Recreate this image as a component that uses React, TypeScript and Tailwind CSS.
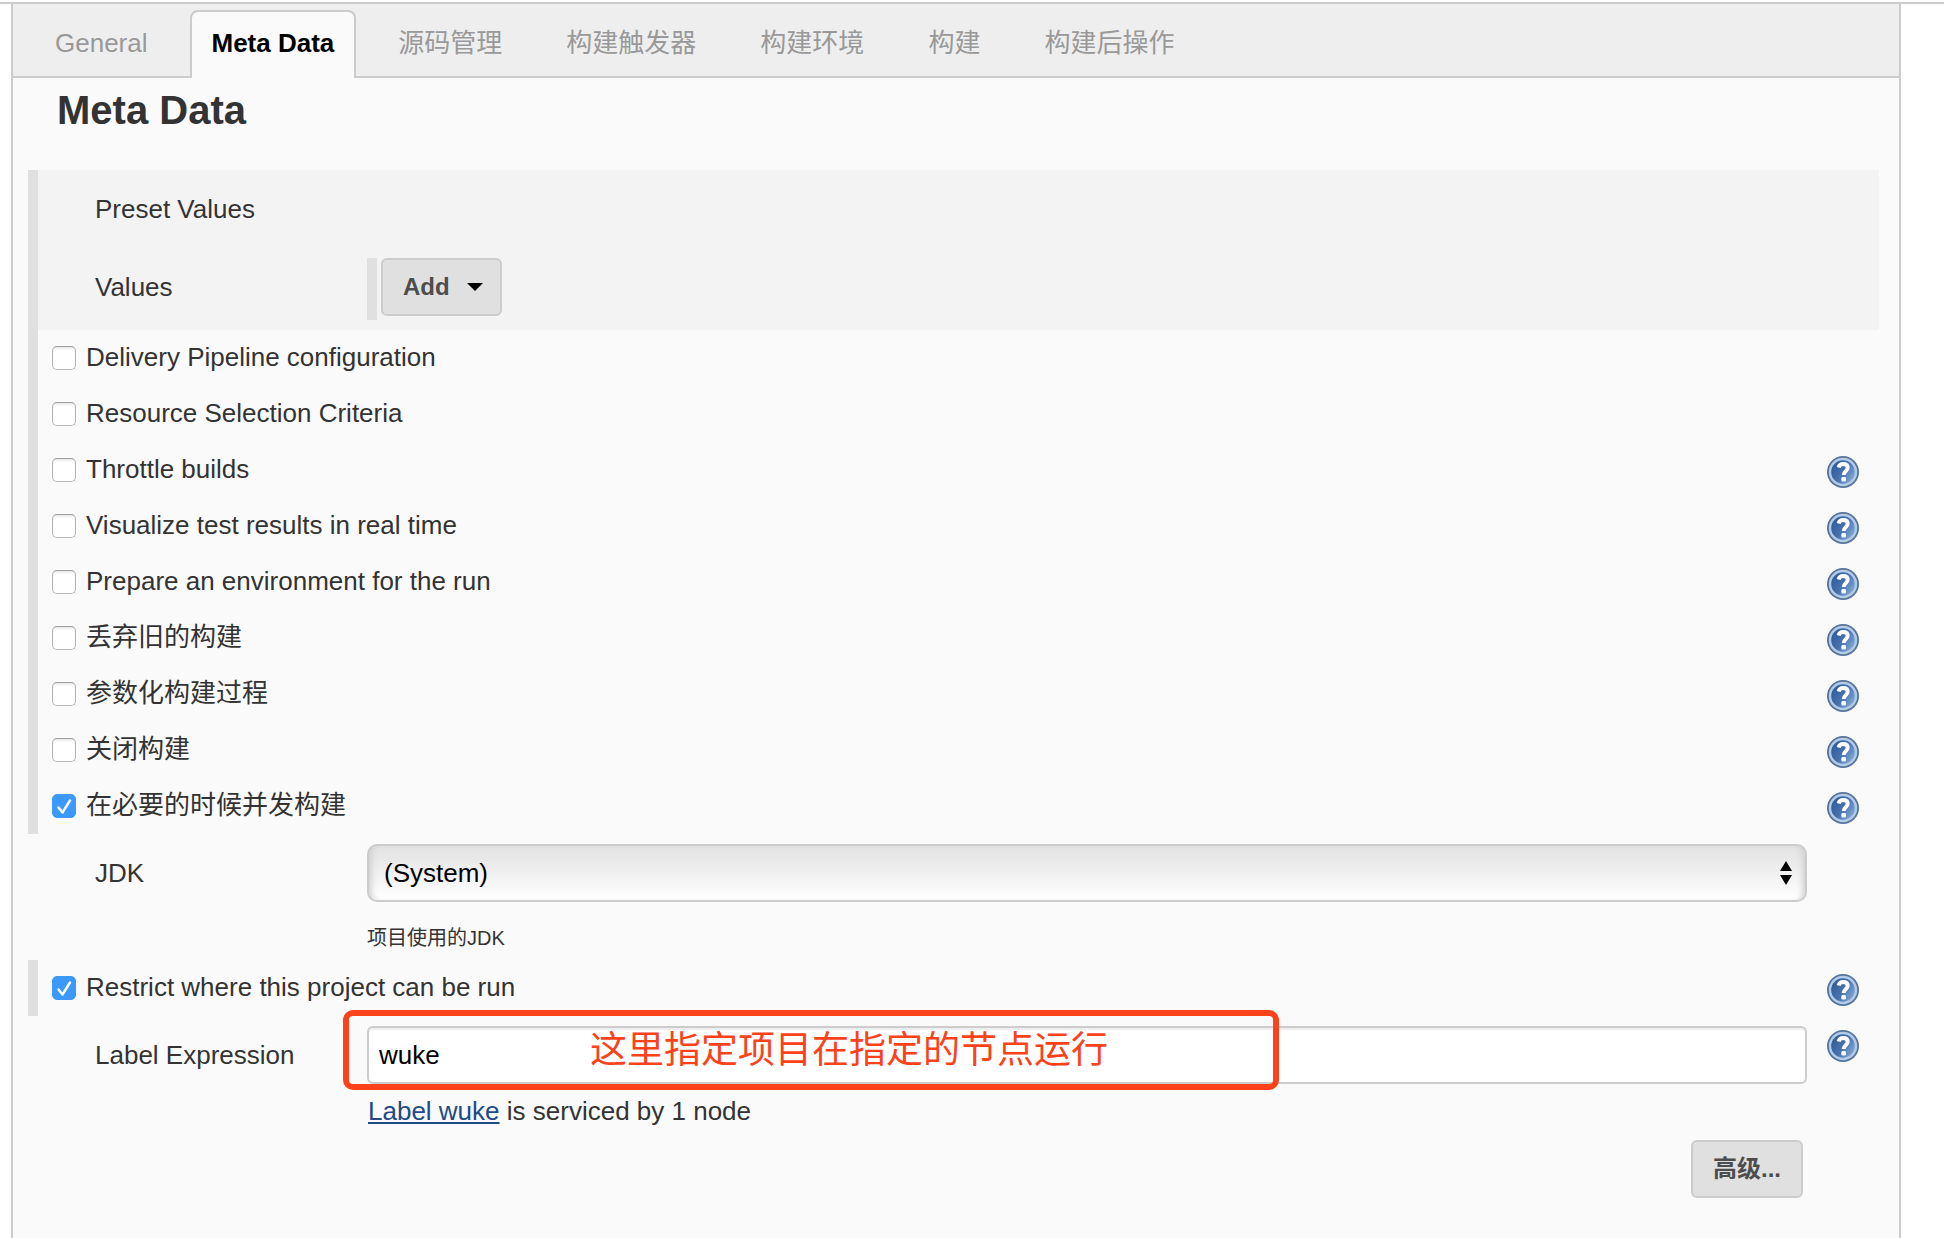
import React, { useId } from 'react';

const TABS = ['General', 'Meta Data', '源码管理', '构建触发器', '构建环境', '构建', '构建后操作'];

const OPTIONS = [
  { label: 'Delivery Pipeline configuration' },
  { label: 'Resource Selection Criteria' },
  { label: 'Throttle builds', help: true },
  { label: 'Visualize test results in real time', help: true },
  { label: 'Prepare an environment for the run', help: true },
  { label: '丢弃旧的构建', help: true },
  { label: '参数化构建过程', help: true },
  { label: '关闭构建', help: true },
  { label: '在必要的时候并发构建', help: true, checked: true },
];

function HelpButton() {
  const id = useId();
  return (
    <button type="button" aria-label="Help" className="mt-3.5 size-8 shrink-0">
      <svg viewBox="0 0 32 32" className="size-8">
        <defs>
          <linearGradient id={id} x1="0" y1="0.2" x2="1" y2="0.8">
            <stop offset="0" stopColor="#2f5c98" />
            <stop offset="0.5" stopColor="#4673ae" />
            <stop offset="1" stopColor="#86aad6" />
          </linearGradient>
        </defs>
        <circle cx="16" cy="16" r="16" fill="#54749f" />
        <circle cx="16" cy="16" r="14.2" fill="#b4cbe8" />
        <circle cx="16" cy="16" r="11.8" fill={`url(#${id})`} />
        <path
          d="M11.6 11.4c.6-2.4 2.2-3.4 4.6-3.4 2.8 0 4.5 1.5 4.5 3.8 0 3.3-4 3.4-4 7.2"
          fill="none"
          stroke="#fff"
          strokeWidth="4"
        />
        <rect x="14.4" y="21" width="4.6" height="4.6" rx="1.4" fill="#fff" />
      </svg>
    </button>
  );
}

function OptionRow({ label, help, checked }: { label: string; help?: boolean; checked?: boolean }) {
  return (
    <div className="flex h-14 items-start border-l-10 border-[#e0e0e0] pr-5 pl-3.5">
      <label className="flex flex-1 items-start gap-2.5">
        <span className="relative mt-4 size-6 shrink-0">
          <input
            type="checkbox"
            defaultChecked={checked}
            className="peer block size-6 appearance-none rounded-[5px] border border-[#b4b4b4] border-t-[#9c9c9c] bg-white shadow-[inset_0_2px_2px_#ececec] checked:border-[#3b99fc] checked:bg-[#3b99fc] checked:shadow-none"
          />
          <svg viewBox="0 0 24 24" className="pointer-events-none absolute inset-0 hidden size-6 peer-checked:block">
            <path d="M6.5 13.5l4 5 7.5-12" fill="none" stroke="#fff" strokeWidth="2.4" strokeLinecap="round" strokeLinejoin="round" />
          </svg>
        </span>
        <span className="leading-[54px]">{label}</span>
      </label>
      {help && <HelpButton />}
    </div>
  );
}

export default function App() {
  return (
    <div className="flex min-h-screen flex-col bg-white pt-0.5 font-['Liberation_Sans','Noto_Sans_CJK_SC',sans-serif] text-[26px] text-[#333]">
      <div className="flex flex-1 flex-col border-t-2 border-[#ccc]">
        <main className="mr-[43px] ml-[11px] flex-1 border-x-2 border-[#ccc] bg-[#fafafa]">
          {/* Section tabs */}
          <div role="tablist" className="flex gap-5 border-b-2 border-[#ccc] bg-[#eee] pt-1.5 pl-5">
            {TABS.map((tab) => (
              <button
                key={tab}
                type="button"
                role="tab"
                aria-selected={tab === 'Meta Data'}
                className="-mb-0.5 rounded-t-lg border-2 border-b-0 border-transparent px-5 pb-1 leading-[62px] text-[#999] aria-selected:border-[#ccc] aria-selected:bg-[#fafafa] aria-selected:font-bold aria-selected:text-black"
              >
                {tab}
              </button>
            ))}
          </div>

          <h1 className="mb-7 pl-11 text-[40px] leading-[64px] font-bold">Meta Data</h1>

          <form className="pr-5 pl-[15px]">
            <section className="border-l-10 border-[#e0e0e0] bg-[#f3f3f3] pl-[57px]">
              <div className="leading-[78px]">Preset Values</div>
              <div className="flex py-2.5">
                <div className="w-[272px] leading-[58px]">Values</div>
                <div className="h-[62px] border-l-10 border-[#e0e0e0] pl-1">
                  <button
                    type="button"
                    className="flex h-[58px] items-center gap-[17px] rounded-md border-2 border-[#ccc] bg-[#e0e0e0] pr-[17px] pl-5 text-2xl font-bold text-[#4d4d4d]"
                  >
                    Add
                    <svg viewBox="0 0 16 8" className="h-2 w-4">
                      <path d="M0 0h16l-8 8z" fill="#000" />
                    </svg>
                  </button>
                </div>
              </div>
            </section>

            {OPTIONS.map((option) => (
              <OptionRow key={option.label} {...option} />
            ))}

            <div className="flex pt-2.5 pr-[72px] pl-[67px]">
              <label htmlFor="jdk" className="w-[272px] leading-[58px]">
                JDK
              </label>
              <div className="flex-1">
                <div className="relative">
                  <select
                    id="jdk"
                    className="block h-[58px] w-full appearance-none rounded-[10px] border-2 border-[#ccc] bg-linear-to-b from-[#e2e2e2] to-white px-[15px] text-black shadow-[inset_7px_0_6px_-5px_#ccc,inset_-7px_0_6px_-5px_#ccc]"
                  >
                    <option>(System)</option>
                  </select>
                  <svg viewBox="0 0 12 24" className="pointer-events-none absolute top-[17px] right-[15px] h-6 w-3">
                    <path d="M0 10l6-10 6 10zM0 14l6 10 6-10z" fill="#000" />
                  </svg>
                </div>
                <p className="mt-3.5 text-xl leading-[44px]">项目使用的JDK</p>
              </div>
            </div>

            <OptionRow label="Restrict where this project can be run" help checked />

            <div className="flex gap-5 pr-5 pl-[67px]">
              <div className="flex flex-1 pt-2.5">
                <label htmlFor="label-expression" className="w-[272px] leading-[58px]">
                  Label Expression
                </label>
                <div className="relative flex-1">
                  <input
                    id="label-expression"
                    type="text"
                    defaultValue="wuke"
                    className="block h-[58px] w-full rounded-md border-2 border-[#ccc] bg-white px-2.5 text-black shadow-[inset_0_2px_1px_#eee]"
                  />
                  {/* Annotation drawn over the field */}
                  <div className="pointer-events-none absolute -top-4 -left-6 h-20 w-[936px] rounded-[10px] border-6 border-[#fb421b] pl-[241px] text-[37px] leading-[70px] whitespace-nowrap text-[#fb421b]">
                    这里指定项目在指定的节点运行
                  </div>
                  <p className="mb-0.5 pl-px leading-[54px]">
                    <a href="#label-wuke" className="text-[#204a87] underline">
                      Label wuke
                    </a>{' '}
                    is serviced by 1 node
                  </p>
                  <div className="flex justify-end pr-1">
                    <button
                      type="button"
                      className="h-[58px] rounded-md border-2 border-[#ccc] bg-[#e0e0e0] px-5 text-2xl font-bold text-[#4d4d4d]"
                    >
                      高级...
                    </button>
                  </div>
                </div>
              </div>
              <HelpButton />
            </div>
          </form>
        </main>
      </div>
    </div>
  );
}
